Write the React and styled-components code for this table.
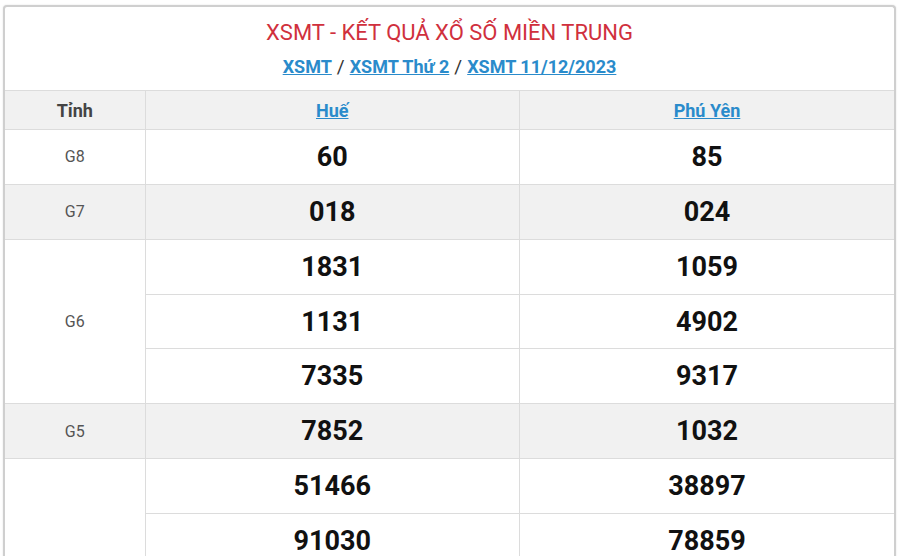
import styled, { createGlobalStyle } from "styled-components"

// Styles globaux de la page
const GlobalStyle = createGlobalStyle`
  body {
    margin: 0;
    padding: 5px 4px 0 3px;
    background: #fff;
    font-family: Roboto, "Liberation Sans", Arial, sans-serif;
  }
`
// Carte principale
const Card = styled.div`
  border: 2px solid #cfcfcf;
  border-bottom: none;
  border-radius: 4px 4px 0 0;
  box-shadow: 0 0 2px rgba(0, 0, 0, 0.12);
  background: #fff;
  overflow: hidden;
`
// En-tête avec titre et fil d'ariane
const Header = styled.div`
  height: 83px;
  display: flex;
  flex-direction: column;
  align-items: center;
  justify-content: flex-start;
`
const Title = styled.h2`
  margin: 13px 0 0;
  font-size: 22px;
  font-weight: 400;
  color: #d0303d;
  line-height: 26px;
`
const Crumbs = styled.div`
  margin-top: 10px;
  font-size: 18px;
  font-weight: 700;
  color: #444;
  line-height: 22px;
`
const Link = styled.a`
  color: #2a8bcb;
  text-decoration: underline;
`
const Sep = styled.span`
  margin: 0 5px;
  font-weight: 400;
  font-size: 19px;
  color: #333;
`
// Tableau des résultats
const Table = styled.table`
  width: 100%;
  border-collapse: collapse;
  table-layout: fixed;
`
const HeadCell = styled.th`
  height: 38px;
  background: #f1f1f1;
  border: 1px solid #dcdcdc;
  border-left: none;
  font-size: 18px;
  font-weight: 700;
  color: #444;
  text-align: center;
  padding: 0;
  &:last-child { border-right: none; }
`
const Row = styled.tr`
  background: ${(p) => (p.$alt ? "#f1f1f1" : "#fff")};
`
const Label = styled.td`
  border: 1px solid #dcdcdc;
  border-left: none;
  font-size: 16px;
  color: #555;
  text-align: center;
  padding: 0;
`
const Num = styled.td`
  height: 53.86px;
  border: 1px solid #dcdcdc;
  font-size: 27px;
  font-weight: 700;
  color: #111;
  text-align: center;
  padding: 0;
  &:last-child { border-right: none; }
`

const rows = [
  { g: "G8", v: [["60", "85"]], alt: false },
  { g: "G7", v: [["018", "024"]], alt: true },
  { g: "G6", v: [["1831", "1059"], ["1131", "4902"], ["7335", "9317"]], alt: false },
  { g: "G5", v: [["7852", "1032"]], alt: true },
  { g: "G4", v: [["51466", "38897"], ["91030", "78859"]], alt: false, hideLabel: true },
]

function App() {
  return (
    <>
      <GlobalStyle />
      <Card>
        <Header>
          <Title>XSMT - KẾT QUẢ XỔ SỐ MIỀN TRUNG</Title>
          <Crumbs>
            <Link>XSMT</Link>
            <Sep>/</Sep>
            <Link>XSMT Thứ 2</Link>
            <Sep>/</Sep>
            <Link>XSMT 11/12/2023</Link>
          </Crumbs>
        </Header>
        <Table>
          <colgroup>
            <col style={{ width: 140 }} />
            <col />
            <col />
          </colgroup>
          <thead>
            <tr>
              <HeadCell>Tỉnh</HeadCell>
              <HeadCell><Link>Huế</Link></HeadCell>
              <HeadCell><Link>Phú Yên</Link></HeadCell>
            </tr>
          </thead>
          <tbody>
            {rows.map((r) =>
              r.v.map((pair, i) => (
                <Row key={r.g + i} $alt={r.alt}>
                  {i === 0 && (
                    <Label rowSpan={r.v.length}>{r.hideLabel ? "" : r.g}</Label>
                  )}
                  <Num>{pair[0]}</Num>
                  <Num>{pair[1]}</Num>
                </Row>
              ))
            )}
          </tbody>
        </Table>
      </Card>
    </>
  )
}

export default App
